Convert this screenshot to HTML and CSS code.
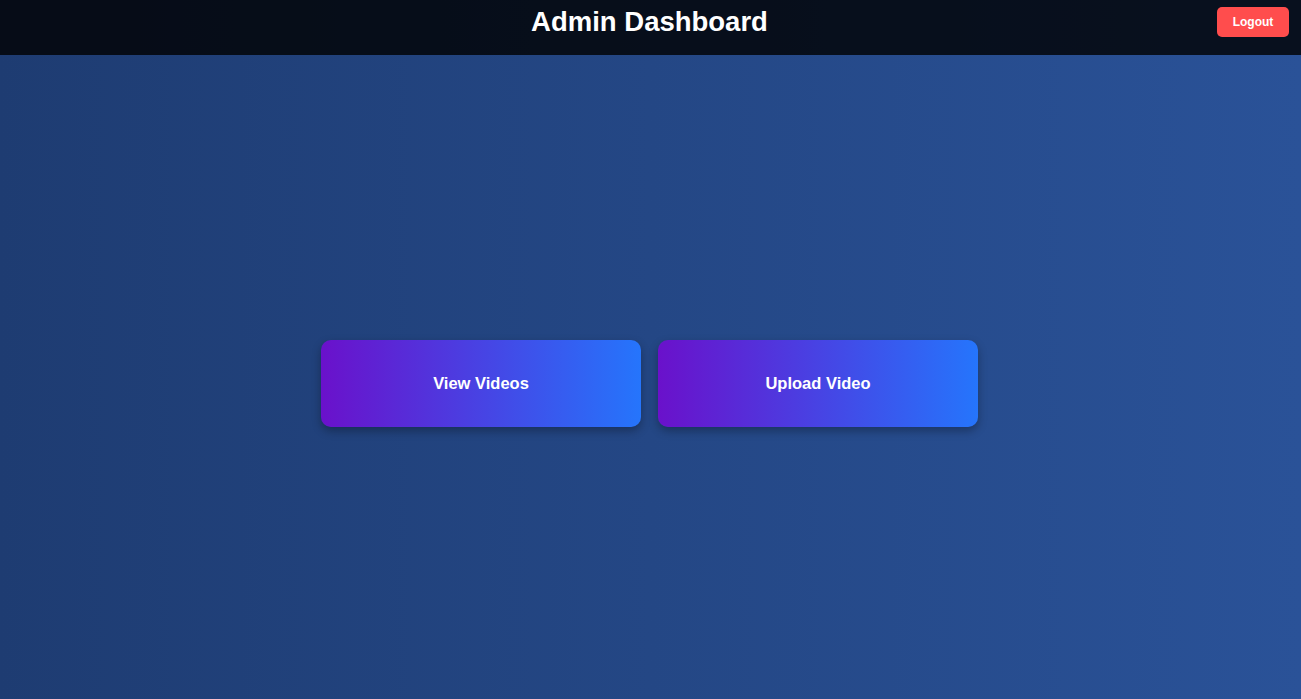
FILE: index.html
```html
<!DOCTYPE html>
<html lang="en">
<head>
<meta charset="UTF-8">
<title>Admin Dashboard</title>
<link rel="stylesheet" href="styles.css">
</head>
<body>
<header class="topbar">
  <h1 class="title">Admin Dashboard</h1>
  <button class="logout">Logout</button>
</header>
<main class="main">
  <div class="cards">
    <a class="card" href="#">View Videos</a>
    <a class="card" href="#">Upload Video</a>
  </div>
</main>
</body>
</html>
```
FILE: styles.css
```css
* { box-sizing: border-box; }
html, body { margin: 0; padding: 0; height: 100%; }
body {
  font-family: "Liberation Sans", Arial, sans-serif;
  background: linear-gradient(to right, #1e3c72, #2a5298);
  color: #fff;
  min-height: 100vh;
  display: flex;
  flex-direction: column;
}
.topbar {
  height: 55px;
  background: rgba(0, 0, 0, 0.8);
  display: flex;
  align-items: center;
  justify-content: center;
  position: relative;
  flex-shrink: 0;
}
.title {
  margin: -11px 0 0 -2px;
  font-size: 27.5px;
  font-weight: 700;
}
.logout {
  position: absolute;
  right: 12px;
  top: 7px;
  width: 72px;
  height: 30px;
  border: none;
  border-radius: 5px;
  background: #ff4d4d;
  color: #fff;
  font-family: "Liberation Sans", Arial, sans-serif;
  font-weight: 700;
  font-size: 12px;
  cursor: pointer;
}
.main {
  flex: 1;
  display: flex;
  align-items: center;
  justify-content: center;
  padding-top: 12px;
  padding-right: 2px;
}
.cards {
  display: flex;
  gap: 17px;
}
.card {
  width: 320px;
  height: 87px;
  border-radius: 10px;
  background: linear-gradient(to right, #6a11cb, #2575fc);
  color: #fff;
  text-decoration: none;
  font-weight: 700;
  font-size: 16.5px;
  display: flex;
  align-items: center;
  justify-content: center;
  box-shadow: 0 4px 10px rgba(0, 0, 0, 0.3);
}
```
